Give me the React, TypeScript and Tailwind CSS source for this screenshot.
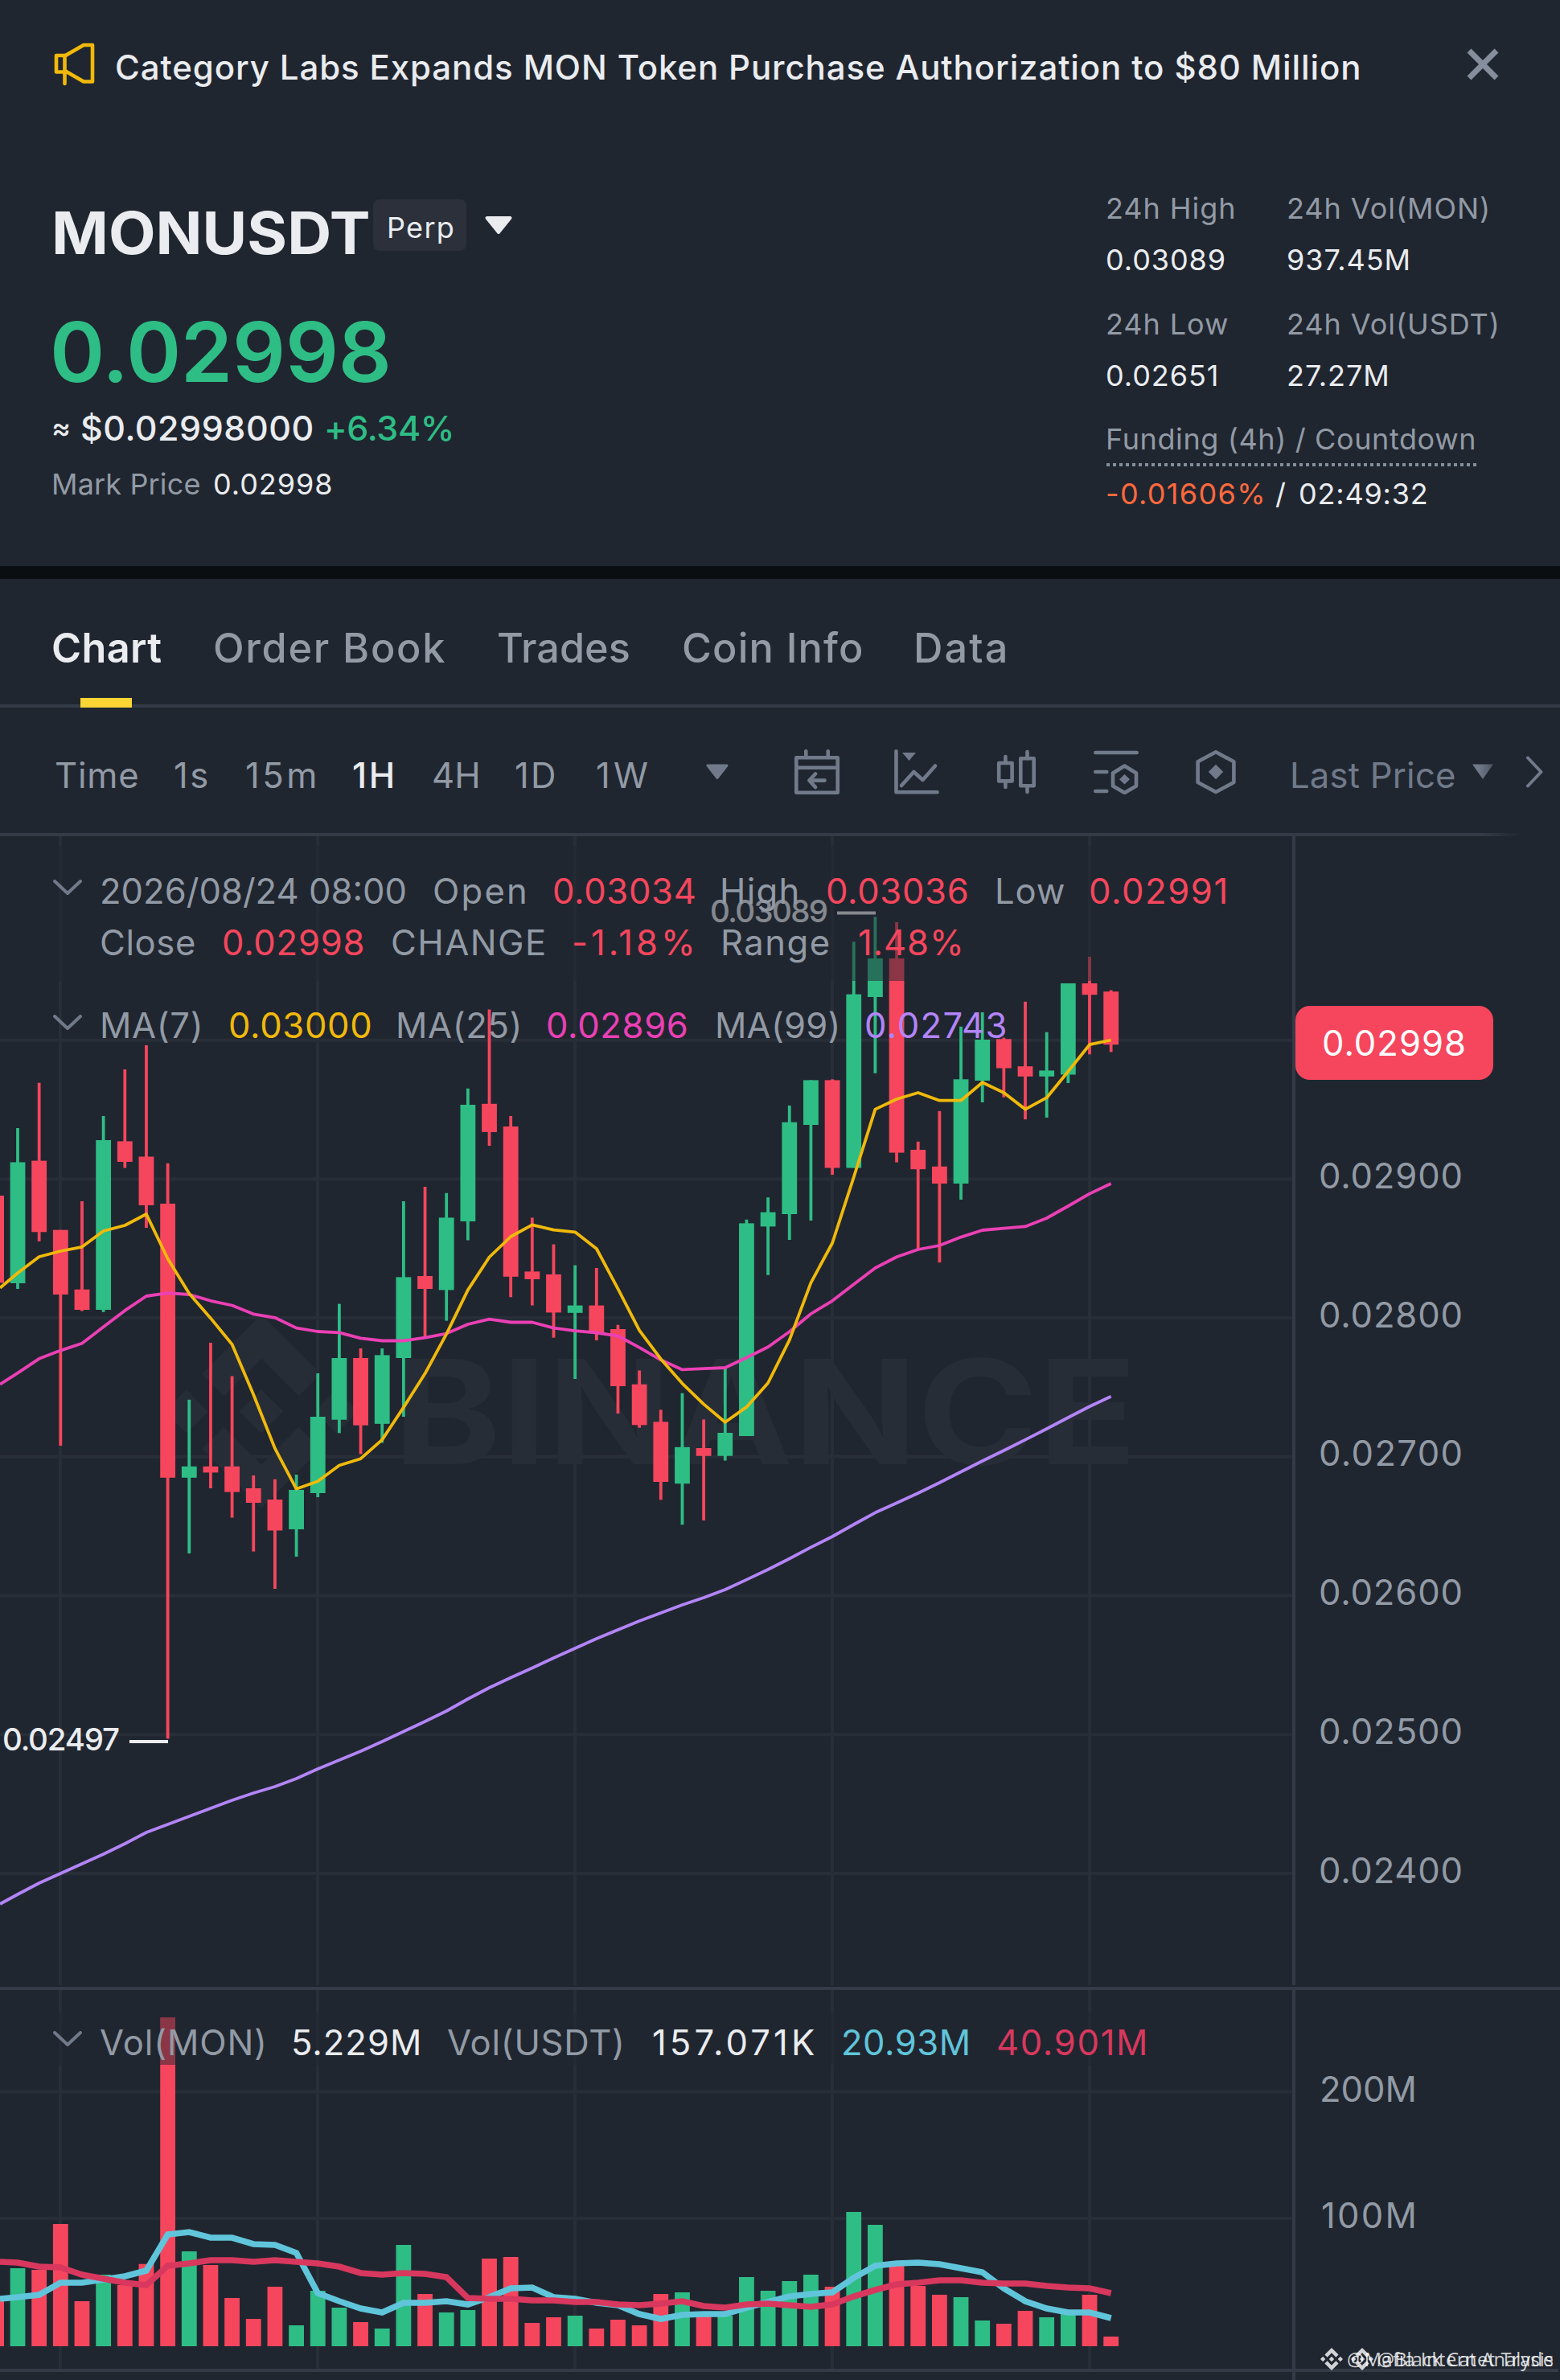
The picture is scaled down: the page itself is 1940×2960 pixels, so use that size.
import { SiBinance } from "react-icons/si";

type Candle = [dir: "u" | "d", high: number, top: number, bottom: number, low: number, volumeTop: number];

const UP = "#2ebd85";
const DOWN = "#f6465d";

// chart space: first candle centre and distance between candles
const X0 = 22;
const STEP = 26.66;
const VOL_BASE = 2918;

const candles: Candle[] = [
  ["u", 1403, 1445.5, 1596, 1603, 2821],
  ["d", 1346.7, 1443.6, 1532.3, 1543.8, 2823],
  ["d", 1529.7, 1529.7, 1610, 1798, 2766],
  ["d", 1494, 1603.7, 1629, 1630.5, 2862],
  ["u", 1388, 1418, 1629, 1631.8, 2829],
  ["d", 1330, 1419.4, 1445, 1452.5, 2842],
  ["d", 1300, 1438.5, 1499, 1527, 2815.7],
  ["d", 1446.8, 1497, 1837.8, 2162.4, 2509],
  ["u", 1740.8, 1823.8, 1837.8, 1932, 2800],
  ["d", 1670, 1823.8, 1831.4, 1851, 2817],
  ["d", 1711.5, 1823.8, 1855.6, 1887.5, 2858],
  ["d", 1835, 1851, 1869, 1929.6, 2884],
  ["d", 1839.7, 1865, 1903.5, 1976, 2844],
  ["u", 1834, 1853, 1902, 1936, 2892],
  ["u", 1708, 1762, 1857, 1862, 2849],
  ["u", 1621.6, 1689, 1765.7, 1782.3, 2870],
  ["d", 1677, 1689, 1772.7, 1808.5, 2888],
  ["u", 1677, 1685.4, 1770.8, 1794.4, 2896],
  ["u", 1494, 1588.4, 1689, 1762, 2792],
  ["d", 1476, 1587, 1603, 1663.7, 2853],
  ["u", 1483.8, 1514.4, 1604.4, 1642.6, 2876],
  ["u", 1353.7, 1374, 1519, 1542.5, 2873],
  ["d", 1255.5, 1372.8, 1408, 1425, 2809],
  ["d", 1388, 1401, 1587.8, 1613.3, 2807],
  ["d", 1514.4, 1581.4, 1591, 1623.5, 2889],
  ["d", 1547.6, 1585, 1632.4, 1663.7, 2882],
  ["u", 1573.6, 1623.6, 1632.8, 1715, 2880],
  ["d", 1577, 1623.6, 1658, 1667, 2896],
  ["d", 1647.7, 1653, 1724, 1758, 2885],
  ["d", 1704.5, 1721.7, 1772.3, 1775.7, 2892],
  ["d", 1753.3, 1768.3, 1843, 1865.3, 2853],
  ["u", 1732.7, 1799.8, 1845.2, 1896.3, 2851],
  ["d", 1765.4, 1801, 1810.7, 1891, 2878],
  ["u", 1700.5, 1782, 1810.7, 1816.5, 2880],
  ["u", 1516.8, 1521.4, 1786, 1786, 2832],
  ["u", 1489.2, 1507.6, 1525.4, 1585.7, 2849],
  ["u", 1375, 1395.7, 1510, 1542, 2837],
  ["u", 1343.4, 1343.4, 1399, 1518, 2829],
  ["d", 1342.3, 1343.4, 1452.5, 1461, 2844],
  ["u", 1171.2, 1236.6, 1452.5, 1452.5, 2751],
  ["u", 1140.2, 1192, 1240, 1334.8, 2767],
  ["d", 1147, 1192, 1433.6, 1445.6, 2817],
  ["d", 1419.8, 1430, 1454.2, 1553, 2843],
  ["d", 1381.9, 1450.8, 1472, 1570.2, 2854],
  ["u", 1276.8, 1342.3, 1472, 1492, 2857],
  ["u", 1259, 1293, 1344, 1371, 2886],
  ["d", 1290.6, 1292.3, 1328.5, 1364.7, 2890],
  ["d", 1245.8, 1326.2, 1338.8, 1392.2, 2874],
  ["u", 1283.7, 1331.4, 1338.8, 1390, 2882],
  ["u", 1223, 1223, 1336.5, 1347, 2878],
  ["d", 1190, 1223, 1237.2, 1311.3, 2854],
  ["d", 1231.5, 1233.2, 1299.2, 1308.4, 2906],
];

// each series starts at the left edge (x = 0), then one value per candle
const ma7 = [
  1601.8, 1583.3, 1563, 1556, 1550.8, 1531, 1524, 1510, 1565.5, 1608.8, 1639.4, 1672, 1734.5, 1801.4, 1851.8, 1842.3,
  1822.5, 1814.2, 1790.6, 1750.4, 1708.3, 1659.2, 1604.4, 1563.5, 1538, 1523.4, 1529.7, 1532.3, 1553, 1602.9, 1654.6,
  1690.2, 1720.6, 1746.4, 1768.8, 1749.9, 1720, 1666.6, 1595.4, 1546, 1464, 1379.6, 1367, 1359, 1368.7, 1368.7, 1346.3,
  1359, 1379.6, 1365.2, 1332.5, 1299.2, 1293.5,
];
const ma25 = [
  1721.7, 1707.7, 1689.8, 1679.6, 1670.7, 1650.3, 1629.9, 1612, 1608.2, 1610, 1617.8, 1623.5, 1634.3, 1638.8, 1651.6,
  1656, 1657.3, 1664.3, 1667.5, 1667.5, 1663.7, 1658.6, 1647, 1640.7, 1644.5, 1644.5, 1651.6, 1655.2, 1657.5, 1661.5,
  1675.8, 1691.3, 1703.4, 1702.2, 1701, 1688.5, 1675.2, 1656.3, 1634, 1617.8, 1597.2, 1577, 1563.3, 1554, 1549, 1538.6,
  1530, 1527.7, 1525.4, 1515, 1500, 1484.6, 1472,
];
const ma99 = [
  2368, 2356, 2342, 2330, 2318, 2306, 2293, 2279, 2269, 2259, 2249, 2239, 2230, 2222, 2212, 2200, 2189, 2178, 2166,
  2153.5, 2141, 2128, 2113, 2099, 2086.5, 2074.4, 2062, 2050, 2038, 2027, 2016, 2006, 1996, 1987, 1977, 1964.6, 1952,
  1938.5, 1924.4, 1911, 1896, 1881.3, 1869.3, 1857, 1844, 1830.5, 1817, 1804, 1790.6, 1777, 1763, 1749.3, 1736.7,
];
const volMaFast = [
  2859, 2857, 2854, 2839, 2839, 2835, 2831, 2824, 2779, 2776, 2783, 2783, 2791, 2792, 2802, 2852, 2862, 2871, 2876,
  2864, 2864, 2862, 2866, 2857, 2846, 2845, 2857, 2859, 2864, 2867, 2878, 2884, 2879, 2878, 2878, 2870, 2863, 2856,
  2853, 2851, 2833, 2818, 2815, 2814, 2816, 2821, 2826, 2846, 2862, 2871, 2876, 2876, 2883,
];
const volMaSlow = [
  2813, 2814, 2819, 2820, 2829, 2834, 2839, 2842, 2818, 2815, 2811, 2811, 2813, 2811, 2813, 2815, 2819, 2827, 2829,
  2827, 2828, 2832, 2858, 2859, 2859, 2861, 2861, 2863, 2863, 2866, 2867, 2865, 2862, 2868, 2870, 2866, 2865, 2867,
  2869, 2866, 2856, 2848, 2841, 2839, 2836, 2836, 2839, 2840, 2840, 2843, 2845, 2846, 2852,
];

const gridX = [75, 395, 715, 1035, 1355];
const priceGrid: [number, string][] = [
  [1293.7, ""],
  [1466.5, "0.02900"],
  [1639, "0.02800"],
  [1811.7, "0.02700"],
  [1984.4, "0.02600"],
  [2157.2, "0.02500"],
  [2330, "0.02400"],
];

const toPoints = (values: number[]) =>
  values.map((y, i) => `${i === 0 ? 0 : X0 + STEP * (i - 1)},${y}`).join(" ");

function MegaphoneIcon() {
  return (
    <svg width="56" height="56" viewBox="0 0 56 56" fill="none" stroke="#f0b90b" strokeWidth="4.6" strokeLinejoin="round" strokeLinecap="round">
      <path d="M15.5 17H4V37.5H15.5" />
      <path d="M15.5 17L38 4H49V49.5H38L15.5 36.5" />
      <path d="M14.5 17V52" />
    </svg>
  );
}

function CloseIcon() {
  return (
    <svg width="40" height="40" viewBox="0 0 40 40" stroke="#848e9c" strokeWidth="7">
      <path d="M3 3L37 37M37 3L3 37" />
    </svg>
  );
}

function ChevronDown() {
  return (
    <svg width="36" height="20" viewBox="0 0 36 20" fill="none" stroke="#707a8a" strokeWidth="4" strokeLinecap="round" strokeLinejoin="round" className="shrink-0">
      <path d="M2 2L18 17L34 2" />
    </svg>
  );
}

function ToolbarIcons() {
  const common = {
    width: 56,
    height: 56,
    viewBox: "0 0 56 56",
    fill: "none",
    stroke: "#707a8a",
    strokeWidth: 4.6,
    strokeLinecap: "round",
    strokeLinejoin: "round",
  } as const;
  return (
    <div className="flex gap-[68px]">
      <svg {...common}>
        <rect x="2.3" y="10.3" width="51.4" height="43.4" />
        <path d="M2.3 22.8H53.7M14.3 2.3V10M41.7 2.3V10" />
        <path d="M37.5 38.6H19M26 30.5L18.5 38.6L26 47" />
      </svg>
      <svg {...common}>
        <path d="M2.5 2.3V53.3H53.5" />
        <path d="M9 45L24.4 28L35.5 38L51 20.5" />
        <path d="M10 4H27L18.5 14Z" fill="#707a8a" stroke="none" />
      </svg>
      <svg {...common}>
        <rect x="6.2" y="17" width="16.4" height="22.4" />
        <rect x="33.3" y="11.2" width="16.4" height="34" />
        <path d="M14.4 9V17M14.4 39.4V47M41.5 3V11.2M41.5 45.2V53" />
      </svg>
      <svg {...common}>
        <path d="M2.3 4H53.7M2.3 28H16.3M2.3 52H16.3" />
        <path d="M38.5 20.5L53 29.5V45.5L38.5 54L24 45.5V29.5Z" />
        <path d="M38.5 31L45 37.3L38.5 43.6L32 37.3Z" fill="#707a8a" stroke="none" />
      </svg>
      <svg {...common}>
        <path d="M28 3.3L50.4 15.3V41L28 53L5.6 41V15.3Z" />
        <path d="M28 18.7L37.2 28L28 37.3L18.8 28Z" fill="#707a8a" stroke="none" />
      </svg>
    </div>
  );
}

function Stat({ label, value, className = "" }: { label: string; value: string; className?: string }) {
  return (
    <div className={`text-[36px] leading-[64px] tracking-[0.026em] ${className}`}>
      <p className="text-[#929aa5]">{label}</p>
      <p>{value}</p>
    </div>
  );
}

function Header() {
  return (
    <header className="h-[704px]">
      {/* Announcement */}
      <div className="flex h-[227px] items-start pt-[52px] pl-[66px]">
        <MegaphoneIcon />
        <p className="ml-[21px] w-[1681px] text-[42px] leading-[64px] font-medium tracking-[0.021em] whitespace-nowrap">
          Category Labs Expands MON Token Purchase Authorization to $80 Million
        </p>
        <div className="pt-2">
          <CloseIcon />
        </div>
      </div>

      <div className="flex">
        {/* Symbol and price */}
        <div className="w-[1375px] pl-16">
          <div className="flex items-start pt-[21px]">
            <h1 className="w-[400px] origin-left scale-x-[1.05] pt-[2px] text-[72.5px] leading-[80px] font-bold">
              MONUSDT
            </h1>
            <span className="h-16 w-[116px] rounded-lg bg-[#2b303b] pt-[3px] pl-[17px] text-[36px] leading-[64px] tracking-[0.036em]">
              Perp
            </span>
            <svg width="36" height="24" viewBox="0 0 36 24" className="mt-[20px] ml-[22px]">
              <path d="M3.5 3H32.5L18 21Z" fill="#eaecef" stroke="#eaecef" strokeWidth="4" strokeLinejoin="round" />
            </svg>
          </div>
          <p className="mt-[58px] -ml-[2px] text-[103.5px] leading-[100px] font-semibold tracking-[-0.003em] text-[#2ebd85]">
            0.02998
          </p>
          <div className="mt-4 flex text-[43px] leading-[56px] font-medium">
            <span className="w-[36px] text-[36px]">≈</span>
            <span className="w-[303px] tracking-[0.012em]">$0.02998000</span>
            <span className="tracking-[-0.008em] text-[#2ebd85]">+6.34%</span>
          </div>
          <div className="mt-5 flex text-[36px] leading-[44px]">
            <span className="w-[201px] tracking-[0.004em] text-[#929aa5]">Mark Price</span>
            <span className="tracking-[0.026em]">0.02998</span>
          </div>
        </div>

        {/* 24h statistics */}
        <div>
          <div className="flex">
            <Stat label="24h High" value="0.03089" className="w-[225px]" />
            <Stat label="24h Vol(MON)" value="937.45M" />
          </div>
          <div className="mt-4 flex">
            <Stat label="24h Low" value="0.02651" className="w-[225px]" />
            <Stat label="24h Vol(USDT)" value="27.27M" className="tracking-[0.022em]" />
          </div>
          <div className="mt-[17px] text-[36px]">
            <p className="leading-[60px] tracking-[0.017em] text-[#929aa5]">Funding (4h) / Countdown</p>
            <div className="ml-px h-1 w-[460px] bg-[repeating-linear-gradient(90deg,#848e9c_0_4px,transparent_4px_8px)]" />
            <p className="mt-0.5 flex leading-[64px]">
              <span className="w-[211px] tracking-[0.037em] text-[#ff693d]">-0.01606%</span>
              <span className="w-[29px]">/</span>
              <span className="tracking-[0.022em]">02:49:32</span>
            </p>
          </div>
        </div>
      </div>
    </header>
  );
}

function Tabs() {
  return (
    <nav className="flex h-[160px] border-b-4 border-[#333b47] pt-[54px] pl-[64px] text-[50.4px] leading-[64px] font-medium whitespace-nowrap text-[#929aa5]">
      <div className="relative w-[201px] font-semibold tracking-[0.007em] text-[#eaecef]">
        Chart
        <span className="absolute bottom-[-4px] left-[36px] h-3 w-16 bg-[#fcd535]" />
      </div>
      <span className="w-[353px] tracking-[0.034em]">Order Book</span>
      <span className="w-[230px]">Trades</span>
      <span className="w-[288px] tracking-[0.023em]">Coin Info</span>
      <span className="tracking-[0.042em]">Data</span>
    </nav>
  );
}

function Toolbar() {
  return (
    <div className="h-[160px]">
      <div className="flex h-[156px] items-start pt-[52px] pl-[68px] text-[43.6px] leading-[66px] whitespace-nowrap text-[#929aa5]">
        <span className="w-[148px] tracking-[0.018em]">Time</span>
        <span className="w-[89px] tracking-[0.06em]">1s</span>
        <span className="w-[133px] tracking-[0.08em]">15m</span>
        <span className="w-[99px] font-medium tracking-[0.06em] text-[#eaecef]">1H</span>
        <span className="w-[103px]">4H</span>
        <span className="w-[101px] tracking-[0.05em]">1D</span>
        <span className="w-[137px] tracking-[0.1em]">1W</span>
        <svg width="28" height="20" viewBox="0 0 28 20" className="mt-[18px] mr-[82px]">
          <path d="M2 2H26L14 17.5Z" fill="#707a8a" stroke="#707a8a" strokeWidth="3" strokeLinejoin="round" />
        </svg>
        <ToolbarIcons />
        <span className="ml-[64px] w-[226px] tracking-[0.005em] text-[#707a8a]">Last Price</span>
        <svg width="28" height="20" viewBox="0 0 28 20" className="mt-[18px]">
          <defs>
            <linearGradient id="fade" x1="0" x2="1">
              <stop offset="0.3" stopColor="#707a8a" />
              <stop offset="1" stopColor="#707a8a" stopOpacity="0.55" />
            </linearGradient>
          </defs>
          <path d="M1 0.5H27L14 19Z" fill="url(#fade)" />
        </svg>
        <svg width="24" height="40" viewBox="0 0 24 40" fill="none" stroke="#707a8a" strokeWidth="4" strokeLinecap="round" strokeLinejoin="round" className="mt-2 ml-[38px]">
          <path d="M4 2.5L20.5 20L4 37.5" />
        </svg>
      </div>
      <div className="h-1 bg-[linear-gradient(90deg,#333b47_95%,transparent_97.5%)]" />
    </div>
  );
}

function CandleChart() {
  return (
    <svg width="1940" height="1920" viewBox="0 1040 1940 1920" className="block font-['Inter',sans-serif]">
      {/* Grid */}
      <g stroke="#282e38" strokeWidth="4">
        {gridX.map((x) => (
          <path key={x} d={`M${x} 1040V2469M${x} 2475V2946`} />
        ))}
        {priceGrid.map(([y]) => (
          <path key={y} d={`M0 ${y}H1608`} />
        ))}
        <path d="M0 2601.4H1608M0 2759H1608" />
      </g>

      {/* Watermark */}
      <g fill="#272d37">
        <SiBinance x="204.5" y="1635" size={241} color="#272d37" />
        <text x="489" y="1821" fontSize="180" fontWeight="700" textLength="925" lengthAdjust="spacingAndGlyphs">
          BINANCE
        </text>
      </g>

      {/* Candles and volume bars */}
      <rect x="-14" y="1487" width="19" height="108.4" fill={DOWN} />
      <rect x="-14" y="2857" width="19" height={VOL_BASE - 2857} fill={DOWN} />
      {candles.map(([dir, high, top, bottom, low, volumeTop], i) => {
        const x = X0 + STEP * i;
        return (
          <g key={i} fill={dir === "u" ? UP : DOWN}>
            <rect x={x - 1.9} y={high} width="3.8" height={low - high} />
            <rect x={x - 9.4} y={top} width="18.8" height={bottom - top} />
            <rect x={x - 9.4} y={volumeTop} width="18.8" height={VOL_BASE - volumeTop} />
          </g>
        );
      })}

      {/* Moving averages */}
      <g fill="none" strokeWidth="3.8" strokeLinejoin="round">
        <polyline points={toPoints(ma99)} stroke="#b385f8" />
        <polyline points={toPoints(ma25)} stroke="#eb40b5" />
        <polyline points={toPoints(ma7)} stroke="#f0b90b" />
      </g>
      <g fill="none" strokeWidth="7.6">
        <polyline points={toPoints(volMaFast)} stroke="#60c5da" />
        <polyline points={toPoints(volMaSlow)} stroke="#d8385e" />
      </g>

      {/* High and low markers */}
      <g fill="#eaecef" fontSize="38.5" fontWeight="500">
        <text x="883" y="1146.5" textLength="147">0.03089</text>
        <rect x="1041" y="1133.5" width="48" height="4" />
        <text x="3" y="2177" textLength="146">0.02497</text>
        <rect x="161" y="2164" width="48" height="4" />
      </g>

      {/* Legend backdrop */}
      <g fill="#202630" fillOpacity="0.5">
        <rect x="0" y="1052" width="1606" height="168" />
        <rect x="0" y="2503" width="1606" height="65" />
      </g>

      {/* Pane borders */}
      <g fill="#333b47">
        <rect x="1607" y="1040" width="4" height="1429" />
        <rect x="1607" y="2475" width="4" height="471" />
        <rect x="1607" y="2950" width="4" height="10" />
        <rect x="0" y="2471" width="1940" height="4" />
        <rect x="0" y="2946" width="1938" height="4" />
      </g>

      {/* Axis labels */}
      <g fill="#929aa5" fontSize="43.6">
        {priceGrid
          .filter(([, label]) => label)
          .map(([y, label]) => (
            <text key={label} x="1640" y={y + 11.5} textLength="179">
              {label}
            </text>
          ))}
        <text x="1641" y="2614" textLength="121">200M</text>
        <text x="1643" y="2771" textLength="119">100M</text>
      </g>

      {/* Last price */}
      <rect x="1611" y="1251" width="246" height="92" rx="18" fill={DOWN} />
      <text x="1644" y="1313" fontSize="43.6" fill="#fff" textLength="179">
        0.02998
      </text>

      {/* Author marks */}
      <g fill="#fff" fillOpacity="0.8" className="font-['Open_Sans',sans-serif]" fontSize="23.5">
        <SiBinance x="1642" y="2920" size={28} color="#fff" />
        <SiBinance x="1680" y="2920" size={28} color="#fff" />
        <text x="1675" y="2942.5" textLength="257">@Mafia Internet Trade</text>
        <text x="1713" y="2942.5" textLength="219">@Black Cat Analysis</text>
      </g>
    </svg>
  );
}

function ChartLegend() {
  return (
    <div className="absolute top-[37px] left-[66px] text-[43.6px] leading-[64px] whitespace-nowrap text-[#929aa5]">
      <div className="flex items-start">
        <div className="w-[58px] pt-[17px]">
          <ChevronDown />
        </div>
        <div>
          <div className="flex">
            <span className="w-[414px]">2026/08/24 08:00</span>
            <span className="w-[149px] tracking-[0.05em]">Open</span>
            <span className="w-[208px] tracking-[0.015em] text-[#f6465d]">0.03034</span>
            <span className="w-[132px] tracking-[0.03em]">High</span>
            <span className="w-[210px] tracking-[0.015em] text-[#f6465d]">0.03036</span>
            <span className="w-[117px] tracking-[0.02em]">Low</span>
            <span className="tracking-[0.036em] text-[#f6465d]">0.02991</span>
          </div>
          <div className="flex">
            <span className="w-[152px] tracking-[0.014em]">Close</span>
            <span className="w-[210px] tracking-[0.017em] text-[#f6465d]">0.02998</span>
            <span className="w-[225px] tracking-[0.034em]">CHANGE</span>
            <span className="w-[185px] tracking-[0.09em] text-[#f6465d]">-1.18%</span>
            <span className="w-[171px] tracking-[0.034em]">Range</span>
            <span className="tracking-[0.02em] text-[#f6465d]">1.48%</span>
          </div>
        </div>
      </div>
      <div className="mt-[39px] flex items-start">
        <div className="w-[58px] pt-[18px]">
          <ChevronDown />
        </div>
        <span className="w-[160px] tracking-[0.015em]">MA(7)</span>
        <span className="w-[208px] tracking-[0.015em] text-[#f0b90b]">0.03000</span>
        <span className="w-[187px] tracking-[0.014em]">MA(25)</span>
        <span className="w-[210px] tracking-[0.015em] text-[#eb40b5]">0.02896</span>
        <span className="w-[186px] tracking-[0.005em]">MA(99)</span>
        <span className="tracking-[0.032em] text-[#b385f8]">0.02743</span>
      </div>
    </div>
  );
}

function VolumeLegend() {
  return (
    <div className="absolute top-[1469px] left-[66px] flex items-start text-[43.6px] leading-[64px] whitespace-nowrap text-[#929aa5]">
      <div className="w-[58px] pt-[17px]">
        <ChevronDown />
      </div>
      <span className="w-[238px] tracking-[0.02em]">Vol(MON)</span>
      <span className="w-[194px] tracking-[0.022em] text-[#eaecef]">5.229M</span>
      <span className="w-[255px] tracking-[0.017em]">Vol(USDT)</span>
      <span className="w-[235px] tracking-[0.095em] text-[#eaecef]">157.071K</span>
      <span className="w-[193px] tracking-[0.012em] text-[#60c5da]">20.93M</span>
      <span className="tracking-[0.038em] text-[#d8385e]">40.901M</span>
    </div>
  );
}

export default function App() {
  return (
    <div className="h-[2960px] w-[1940px] overflow-hidden bg-[#202630] font-['Inter',sans-serif] text-[#eaecef]">
      <Header />
      <div className="h-4 bg-[#0b0e11]" />
      <Tabs />
      <Toolbar />
      <div className="relative">
        <CandleChart />
        <ChartLegend />
        <VolumeLegend />
      </div>
    </div>
  );
}
